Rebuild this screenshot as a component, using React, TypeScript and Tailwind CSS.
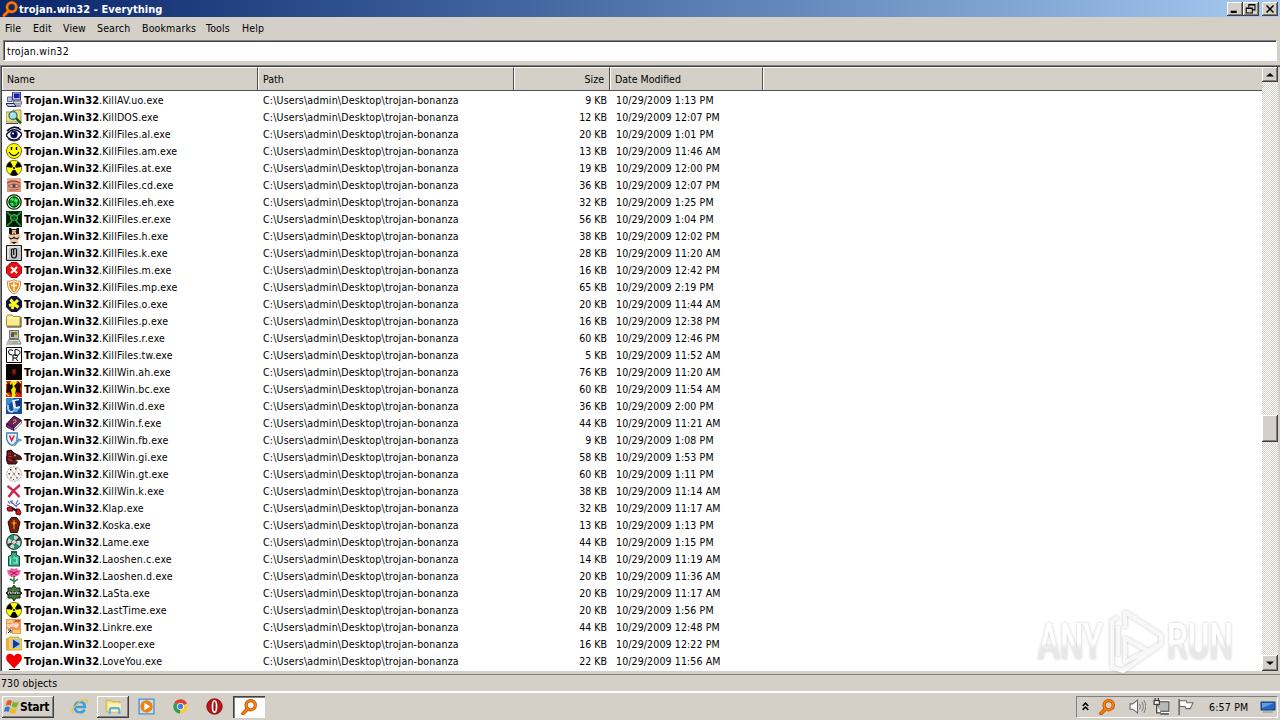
import type { ReactNode } from 'react';

const raised = "bg-[#d4d0c8] shadow-[inset_-1px_-1px_#404040,inset_1px_1px_#fff,inset_-2px_-2px_#808080]";

function Svg({ children, size = 16, className = "" }: { children: ReactNode; size?: number; className?: string }) {
    return (
        <svg width={size} height={size} viewBox="0 0 16 16" className={`shrink-0 ${className}`}>
            {children}
        </svg>
    );
}

function Magnifier({ size = 16 }: { size?: number }) {
    return (
        <Svg size={size}>
            <path d="M6.5 10 2 14.5" stroke="#b34700" strokeWidth="3.6" strokeLinecap="round" />
            <circle cx="9.7" cy="6.2" r="4.6" fill="none" stroke="#b34700" strokeWidth="3.2" />
            <path d="M6.5 10 2 14.5" stroke="#ff8000" strokeWidth="2" strokeLinecap="round" />
            <circle cx="9.7" cy="6.2" r="4.6" fill="none" stroke="#ff8000" strokeWidth="2" />
        </Svg>
    );
}

function Radiation() {
    return (
        <Svg>
            <circle cx="8" cy="8" r="7.7" fill="#ff0" stroke="#222200" strokeWidth=".6" />
            <path d="M8 8 .4 7A7.7 7.7 0 0 1 4.2 1.4ZM8 8l3.8-6.6A7.7 7.7 0 0 1 15.6 7ZM8 8l4 6.6a7.7 7.7 0 0 1-8 0Z" />
            <circle cx="8" cy="8" r="1.9" fill="#ff0" />
            <circle cx="8" cy="8" r="1.1" />
        </Svg>
    );
}

const icons: Record<string, ReactNode> = {
    network: (
        <Svg>
            <path d="M6.500 0h8v8h-8z" fill="#c0c0c8" stroke="#333366" />
            <path d="M8 1.5h5.500V6H8z" fill="#1020d0" />
            <path d="M7 9h8l1 3H8z" fill="#d8d8d8" stroke="#444466" strokeWidth=".8" />
            <path d="M1.500 5h4.500v4.500H1.500z" fill="#c0c0e8" stroke="#6060a0" />
            <path d="M0 11.5h8l2 3H2z" fill="#c8c8e0" stroke="#222266" />
            <path d="M9 14h6" stroke="#222266" />
        </Svg>
    ),
    searchFolder: (
        <Svg>
            <path d="M0 3h6l1-2h8v12H0z" fill="#f3e27a" stroke="#8a7a30" strokeWidth=".8" />
            <circle cx="7" cy="6.5" r="4" fill="#9fe4e8" stroke="#407880" strokeWidth="1.4" />
            <path d="m5 6 2-2" stroke="#fff" />
            <path d="m10 9 5 5.5" stroke="#146018" strokeWidth="2.6" />
            <path d="M0 14.5h12" stroke="#444" />
        </Svg>
    ),
    eye: (
        <Svg>
            <path d="M0 9q8-10 16-1-3 6-8 6T0 9Z" fill="#fff" stroke="#080828" strokeWidth="1.4" />
            <circle cx="8" cy="8.5" r="3.7" fill="#101070" />
            <circle cx="8" cy="8.5" r="2" fill="#000020" />
            <path d="M6 7.5h2" stroke="#fff" strokeWidth="1.4" />
            <path d="M1 5q7-7 14-1M4 2.5Q8 0 13 2" fill="none" stroke="#080828" strokeWidth="1.4" />
            <path d="M2 13q6 4 12 0" fill="none" stroke="#202050" />
        </Svg>
    ),
    smiley: (
        <Svg>
            <circle cx="8" cy="8" r="7.5" fill="#ffff00" stroke="#806800" />
            <path d="M5.5 4v3M10.5 4v3" stroke="#000" strokeWidth="1.5" />
            <path d="M3 9q5 7.5 10 0" fill="none" stroke="#000" strokeWidth="1.1" />
        </Svg>
    ),
    radiation: <Radiation />,
    eyePhoto: (
        <Svg>
            <path d="M1 1h14v14H1z" fill="#e0947c" />
            <path d="M1 1h14v4Q8 2 1 5z" fill="#f0b098" />
            <path d="M1 6q6-4 13 0" fill="none" stroke="#9a5040" strokeWidth="1.3" />
            <path d="M2 9q6-4 12 0-6 3.500-12 0Z" fill="#d8c8c0" stroke="#9c5a48" />
            <circle cx="8" cy="8.7" r="1.7" fill="#444858" />
            <path d="M3 13q5 1 10-1" stroke="#b46450" fill="none" />
        </Svg>
    ),
    greenBall: (
        <Svg>
            <circle cx="8" cy="8" r="7.2" fill="#e8ffe8" stroke="#002800" strokeWidth="1.3" />
            <circle cx="8" cy="8" r="5.2" fill="#0a7a20" stroke="#002800" />
            <path d="M4 6q1-3 4-2l-1 3ZM9 4l3 2-1 3-3-2ZM4 9l3 0 1 3-2 0ZM9 10l2-1 0 2Z" fill="#30f058" />
        </Svg>
    ),
    biohazard: (
        <Svg>
            <path d="M0 0h16v16H0z" fill="#041c06" />
            <path d="m1 1 5 5M15 1l-5 5M1 15l5-5M15 15l-5-5" stroke="#249838" strokeWidth="1.7" />
            <circle cx="8" cy="7" r="3.5" fill="#1a7028" stroke="#40c850" />
            <path d="M6 6.5h1.4M9 6.5h1.4M7 10v3M9 10v3" stroke="#021002" strokeWidth="1.4" />
            <path d="M.5.5h15v15H.5z" fill="none" stroke="#0a3810" />
        </Svg>
    ),
    woman: (
        <Svg>
            <path d="M3 0h2l1 1h4l1-1h2v6l-2 1H5L3 6z" fill="#201410" />
            <path d="M6 2h4v4H6zM2 7l12-1 1 4-3 1 .5 5h-9l.5-5-2-1z" fill="#ecc8a8" />
            <path d="M3 8.500q2.500 3.500 5 0 2.500 3.500 5 0l-1 3-4-1-4 1z" fill="#181010" />
            <path d="M6.300 3.500h1M8.700 3.500h1M7 5.300h2" stroke="#503020" strokeWidth=".8" />
            <path d="M5 14h6l-3 2z" fill="#181010" />
        </Svg>
    ),
    clip: (
        <Svg>
            <path d="M.5.5h15v15H.5z" fill="#c4c4c4" stroke="#181818" />
            <path d="M2 13.500V2h12" fill="none" stroke="#fff" />
            <path d="M5.500 4v6q0 3 2.500 3t2.500-3V4.500q0-1-1.300-1-1.500 0-1.500 1.200V10M5.500 4h2" fill="none" stroke="#101010" strokeWidth="1.200" />
        </Svg>
    ),
    error: (
        <Svg>
            <path d="M5 .5h6L15.500 5v6L11 15.500H5L.5 11V5z" fill="#e81018" stroke="#a00008" />
            <path d="m5 5 6 6m0-6-6 6" stroke="#fff" strokeWidth="2" />
        </Svg>
    ),
    shield: (
        <Svg>
            <path d="M8 .7q3.500 2 6.500 1.500 1 9-6.500 13Q.5 11.200 1.500 2.200 4.500 2.700 8 .7Z" fill="#fff4dc" stroke="#b89060" />
            <path d="M8 2.500q2.500 1.500 5 1.300.3 6.500-5 9.700Q2.700 10.300 3 3.800q2.500.2 5-1.300Z" fill="#f09020" />
            <path d="M8 3.500V12M5 6.500h6" stroke="#fff8e8" strokeWidth="1.500" />
        </Svg>
    ),
    propeller: (
        <Svg>
            <path d="M5 .5h6L15.500 5v6L11 15.500H5L.5 11V5z" fill="#101048" stroke="#080820" />
            <path d="M8 8 4.500 3.500M8 8l4-4M8 8l-5 1.500M8 8l4.500 3.500M8 8l-2 5" stroke="#f8f820" strokeWidth="3" />
        </Svg>
    ),
    folder: (
        <Svg>
            <path d="M.5 3.500 2 2h4l1.500 1.500H14V13H.5z" fill="#ffec8c" stroke="#a09028" />
            <path d="M1 5h12.500" stroke="#fffbe0" />
            <path d="M15 4v10H1" fill="none" stroke="#383010" />
        </Svg>
    ),
    computer: (
        <Svg>
            <path d="M3.500.5h9v8h-9z" fill="#c8c8b8" stroke="#70706a" />
            <path d="M5 2h6v5H5z" fill="#301820" />
            <path d="M5 2h3v2.500H5z" fill="#c04020" />
            <path d="M8 2h3v2.500H8z" fill="#30a040" />
            <path d="M5 4.500h3V7H5z" fill="#3050c0" />
            <path d="M8 4.500h3V7H8z" fill="#e0c030" />
            <path d="M3 9.500h10l2 4.500H2z" fill="#d8dcc8" stroke="#777" />
            <path d="M1 11h5l-1 4H0z" fill="#b8bcb0" />
            <path d="M6 12h6" stroke="#608050" />
        </Svg>
    ),
    cdr: (
        <Svg>
            <path d="M.5.5h15v15H.5z" fill="#fff" stroke="#000" />
            <path d="M7 3.500Q2.500 1.500 2.500 5t4 3M9 2.500v6q5 0 5-3t-5-3M7 14V8h2.500q2 0 2 1.500T9.500 11H7m2.500 0 2.500 3" fill="none" stroke="#000" />
        </Svg>
    ),
    dark: (
        <Svg>
            <path d="M0 0h16v16H0z" fill="#0c0202" />
            <path d="M6 5h4v5l-2 2-2-2z" fill="#5c1008" />
            <path d="M7 6h2v3H7z" fill="#902010" />
        </Svg>
    ),
    flames: (
        <Svg>
            <path d="M0 0h16v16H0z" fill="#e02010" />
            <path d="M5 0h6l-1 5 2 3-3 8H6L5 9 3 5z" fill="#f8e800" />
            <path d="m1 1 4 3 1-2 1 4-2 3 1 5-3-3-3 2 1-5zM10 3l3-2 2 3-1 4 1 5-4-2-2 3 1-6-2-3z" fill="#180c04" />
            <path d="M0 12l3 3M13 0l2 2M0 1l1 2" stroke="#f8e800" strokeWidth="1.400" />
        </Svg>
    ),
    blueDoc: (
        <Svg>
            <path d="M0 0h16v16H0z" fill="#184c98" />
            <path d="M0 0h8L5 5 0 8z" fill="#3c8ccc" />
            <path d="m6 2 7-1 1 9-6 3z" fill="#e8f0ff" />
            <path d="m9 3 5-1v6l-4 1z" fill="#103068" />
            <path d="M2 7v4q1 3 4 3l3-2" fill="none" stroke="#c8e4ff" strokeWidth="1.600" />
            <path d="m9 10 4 1-2 3H7z" fill="#58b0e8" />
        </Svg>
    ),
    book: (
        <Svg>
            <path d="M.5 9 8 1l7.500 4.500L8 13z" fill="#642060" stroke="#280828" />
            <path d="M.5 9v3L8 15.500V13z" fill="#8c3080" stroke="#280828" strokeWidth=".8" />
            <path d="m8 13 7.500-7.500V8L8 15.500z" fill="#fff" stroke="#333" strokeWidth=".7" />
            <path d="M7 5.500q2-1.500 3 0T7.500 8v1" fill="none" stroke="#f0b040" />
        </Svg>
    ),
    vShield: (
        <Svg>
            <path d="M.7 1h10.600v6q-1 4.500-5.300 6.500Q1.700 11.500.7 7z" fill="#e8f4ff" stroke="#4080b8" strokeWidth="1.300" />
            <path d="m3.500 3.500 2.200 5 2.500-5" fill="none" stroke="#d02838" strokeWidth="1.600" />
            <path d="m8 13.500 4.500-5M11 5q0 3.500 4.500 3" stroke="#6898c4" strokeWidth="2.200" fill="none" />
        </Svg>
    ),
    dragon: (
        <Svg>
            <path d="M1 2l4-1 3 3 6 3 2 3-6 1-3-1 4 3-1 2H2q-3-5-1-9z" fill="#601418" stroke="#280408" />
            <path d="m2 4 3 1M2 7l4 1M2 10l4 2" stroke="#b83838" strokeWidth="1.200" />
            <path d="M8 6.500h2" stroke="#50d060" strokeWidth="1.400" />
            <path d="M10 10.500h5M7 13h5" stroke="#284828" />
        </Svg>
    ),
    ballDots: (
        <Svg>
            <circle cx="8" cy="8" r="7.300" fill="#f4f4f4" stroke="#a0a0a0" strokeDasharray="2 1" />
            <path d="M4 3h1.500v1.500H4zM9 2h1.500v1.500H9zM2.500 7H4v1.500H2.500zM7 7h2v2H7zM12 7h1.500v1.500H12zM4 11h1.500v1.500H4zM10 11h1.500v1.500H10zM7 13h1v1H7z" fill="#8c2020" />
            <path d="m5 4 3 4 3-4M4 12l4-4 3 4" fill="none" stroke="#c0b8b8" strokeWidth=".7" />
        </Svg>
    ),
    redX: (
        <Svg>
            <path d="M1.500 3q6 4 12 11M14 2Q7 7 2.500 14" fill="none" stroke="#c82850" strokeWidth="2.400" />
            <path d="m2 2 4 3" stroke="#e88098" />
        </Svg>
    ),
    klap: (
        <Svg>
            <path d="m2 1 2 3M6 0v4M12 0l-2 4M1 5l3 1M4 1l7 6M14 3l-4 3" stroke="#6060b8" strokeWidth="1.100" />
            <path d="M1 8q2-2 5-1l1 4-5 0zM10 9l3 0 2 3-1 3-4-1z" fill="#d81820" stroke="#500810" />
            <path d="m6 8 5 3" stroke="#301018" strokeWidth="2.400" />
        </Svg>
    ),
    coffin: (
        <Svg>
            <path d="M5.500.5h5L14 5l-2.500 10.500h-7L2 5z" fill="#70220c" stroke="#280c04" />
            <path d="M8 3v9M5.500 6h5" stroke="#e06818" strokeWidth="1.600" />
            <path d="M7.500 5h1v3h-1z" fill="#ffc830" />
        </Svg>
    ),
    disc: (
        <Svg>
            <circle cx="8" cy="8" r="7.300" fill="#c8d8d0" stroke="#183028" strokeWidth="1.200" />
            <path d="M8 8 2 3.500Q5 .7 8 1ZM8 8l6 4.500q-3 2.800-6 2.500Z" fill="#189868" />
            <path d="m8 8 7-2-2-3ZM8 8l-7 2 2 3Z" fill="#303840" />
            <circle cx="8" cy="8" r="2.300" fill="#fff" stroke="#555" />
            <path d="M8 7.500v1" stroke="#555" />
        </Svg>
    ),
    jar: (
        <Svg>
            <path d="M5.500.5h5V4l3 1.500v9.500h-11V5.500l3-1.500z" fill="#30b088" stroke="#105040" />
            <path d="M5 0h6v2H5z" fill="#285848" />
            <path d="M4.500 6.500v7M7 7h4v5H7" fill="none" stroke="#a8f0d8" strokeWidth="1.200" />
        </Svg>
    ),
    rose: (
        <Svg>
            <path d="M1 2l3 0 1-2 3 1 3-1 1 2 3 0-2 5-4 2-4 0-3-3z" fill="#f060a0" />
            <path d="m4 3 4 2 4-2M5 7l3-2 3 2" fill="none" stroke="#b01858" />
            <path d="M8 8v8M8 13l-4-2M8 14l4-3" stroke="#287838" strokeWidth="1.400" fill="none" />
        </Svg>
    ),
    badge: (
        <Svg>
            <path d="m8 0 2 3h4v3l2 2-2 2v3h-4l-2 3-2-3H2v-3L0 8l2-2V3h4z" fill="#407838" stroke="#102810" />
            <path d="M1 6h14v4H1z" fill="#282c28" />
            <path d="M2.500 9V7h2v2m1.500 0V7h2v2m1.500 0V7h2v2m1.500 0V7" fill="none" stroke="#b8c0b8" />
        </Svg>
    ),
    tiles: (
        <Svg>
            <path d="M0 0h15v15H0z" fill="#f09858" />
            <path d="M1 1h6v3H1z" fill="#f8c888" />
            <path d="M2 5v3h2V5m4 3V5H6v3M9 5h3v1.500H9V8h3" fill="none" stroke="#fff" />
            <path d="M1 10h5v5H1z" fill="#fff" />
            <path d="m2 14 3-3m0 3v-3H2" fill="none" stroke="#222" />
            <path d="M7 11h7v3H7z" fill="#f8d060" />
            <path d="M9 1h5v2H9z" fill="#e05838" />
        </Svg>
    ),
    player: (
        <Svg>
            <path d="M0 3 4 1h9v2h3v11H0z" fill="#f8d040" stroke="#c89820" strokeWidth=".8" />
            <path d="M0 3h3v11H0z" fill="#f0a848" />
            <path d="M5 3h9v9H5z" fill="#a8c8f0" />
            <path d="m7 3.500 7 4.500-7 4.500z" fill="#183890" />
        </Svg>
    ),
    heart: (
        <Svg>
            <path d="M8 15.500 1 8Q-1 4 1.500 1.500 5-.8 8 3q3-3.800 6.500-1.500Q17 4 15 8z" fill="#f00000" />
        </Svg>
    ),
};

const files: [string, string, string, string][] = [
    ["network", "KillAV.uo", "9", "1:13 PM"],
    ["searchFolder", "KillDOS", "12", "12:07 PM"],
    ["eye", "KillFiles.al", "20", "1:01 PM"],
    ["smiley", "KillFiles.am", "13", "11:46 AM"],
    ["radiation", "KillFiles.at", "19", "12:00 PM"],
    ["eyePhoto", "KillFiles.cd", "36", "12:07 PM"],
    ["greenBall", "KillFiles.eh", "32", "1:25 PM"],
    ["biohazard", "KillFiles.er", "56", "1:04 PM"],
    ["woman", "KillFiles.h", "38", "12:02 PM"],
    ["clip", "KillFiles.k", "28", "11:20 AM"],
    ["error", "KillFiles.m", "16", "12:42 PM"],
    ["shield", "KillFiles.mp", "65", "2:19 PM"],
    ["propeller", "KillFiles.o", "20", "11:44 AM"],
    ["folder", "KillFiles.p", "16", "12:38 PM"],
    ["computer", "KillFiles.r", "60", "12:46 PM"],
    ["cdr", "KillFiles.tw", "5", "11:52 AM"],
    ["dark", "KillWin.ah", "76", "11:20 AM"],
    ["flames", "KillWin.bc", "60", "11:54 AM"],
    ["blueDoc", "KillWin.d", "36", "2:00 PM"],
    ["book", "KillWin.f", "44", "11:21 AM"],
    ["vShield", "KillWin.fb", "9", "1:08 PM"],
    ["dragon", "KillWin.gi", "58", "1:53 PM"],
    ["ballDots", "KillWin.gt", "60", "1:11 PM"],
    ["redX", "KillWin.k", "38", "11:14 AM"],
    ["klap", "Klap", "32", "11:17 AM"],
    ["coffin", "Koska", "13", "1:13 PM"],
    ["disc", "Lame", "44", "1:15 PM"],
    ["jar", "Laoshen.c", "14", "11:19 AM"],
    ["rose", "Laoshen.d", "20", "11:36 AM"],
    ["badge", "LaSta", "20", "11:17 AM"],
    ["radiation", "LastTime", "20", "1:56 PM"],
    ["tiles", "Linkre", "44", "12:48 PM"],
    ["player", "Looper", "16", "12:22 PM"],
    ["heart", "LoveYou", "22", "11:56 AM"],
];

function TitleBar() {
    return (
        <div className="flex h-[17px] items-center bg-linear-to-r from-[#0a246a] to-[#a6caf0] px-[2px]">
            <Magnifier />
            <span className="ml-[1px] grow pt-[2px] text-[11px] font-bold tracking-[0.05px] text-white">trojan.win32 - Everything</span>
            <div className="flex h-[14px]">
                <div className={`flex w-4 justify-center ${raised}`}>
                    <Svg size={14}><path d="M3 10h7v2.500H3z" /></Svg>
                </div>
                <div className={`flex w-4 justify-center ${raised}`}>
                    <Svg size={14}>
                        <path d="M5.500 6V3h7v6h-3M5 3.500h8M2.500 7v5.500h7V7zM2 7.500h8" fill="none" stroke="#000" strokeWidth="1.200" />
                    </Svg>
                </div>
                <div className={`ml-[3px] flex w-4 justify-center ${raised}`}>
                    <Svg size={14}><path d="m4 4 8 8m0-8-8 8" stroke="#000" strokeWidth="1.800" /></Svg>
                </div>
            </div>
        </div>
    );
}

function MenuBar() {
    return (
        <div className="flex h-[23px] items-center pb-px tracking-[0.15px]">
            <span className="ml-[5px] w-[28px]">File</span>
            <span className="w-[30px]">Edit</span>
            <span className="w-[34px]">View</span>
            <span className="w-[45px]">Search</span>
            <span className="w-[64px]">Bookmarks</span>
            <span className="w-[36px]">Tools</span>
            <span>Help</span>
        </div>
    );
}

function Header() {
    const cell = "flex h-full items-center border-l border-t border-white border-r border-r-[#505050] pb-px";
    return (
        <div className="flex h-[24px] shrink-0 border-b border-[#505050] bg-[#d4d0c8]">
            <div className={`w-[256px] pl-[4px] ${cell}`}>Name</div>
            <div className={`w-[256px] pl-[4px] ${cell}`}>Path</div>
            <div className={`w-[96px] justify-end pr-[5px] ${cell}`}>Size</div>
            <div className={`w-[153px] pl-[4px] ${cell}`}>Date Modified</div>
            <div className="grow border-l border-t border-white" />
        </div>
    );
}

function FileList() {
    return (
        <div className="mt-[4px] flex h-[606px] border-l border-t border-[#808080] bg-white">
            <div className="flex grow border-l border-t border-[#404040]">
                <div className="flex grow flex-col overflow-hidden">
                    <Header />
                    {files.map(([icon, name, size, time], i) => (
                        <div key={i} className="flex h-[17px] shrink-0 items-center whitespace-nowrap">
                            <div className="flex w-[255px] items-center pl-[4px]">
                                {icons[icon]}
                                <div className="ml-[2px] flex items-baseline pt-[2px]">
                                    <span className="w-[75px] text-[11px] font-bold tracking-[0.18px]">Trojan.Win32</span>
                                    <span className="tracking-[0.17px]">.{name}.exe</span>
                                </div>
                            </div>
                            <span className="w-[256px] pl-[6px] tracking-[0.19px]">C:\Users\admin\Desktop\trojan-bonanza</span>
                            <span className="w-[94px] text-right">{size} KB</span>
                            <span className="pl-[9px] tracking-[0.12px]">10/29/2009 {time}</span>
                        </div>
                    ))}
                    <div className="ml-[7px] h-[2px] w-[11px] shrink-0 border-t border-black" />
                </div>
                <div className="flex w-4 flex-col bg-[repeating-conic-gradient(#fff_0_25%,#d4d0c8_0_50%)] bg-[length:2px_2px]">
                    <div className={`flex h-[15px] items-center justify-center ${raised}`}>
                        <Svg size={8}><path d="M0 11 8 4l8 7z" /></Svg>
                    </div>
                    <div className={`mt-[333px] h-[27px] ${raised}`} />
                    <div className={`mt-auto flex h-4 items-center justify-center ${raised}`}>
                        <Svg size={8}><path d="m0 5 8 7 8-7z" /></Svg>
                    </div>
                </div>
                <div className="w-[2px] bg-[#d4d0c8]" />
            </div>
        </div>
    );
}

function Watermark() {
    return (
        <svg width="230" height="90" className="absolute left-[1034px] top-[604px] overflow-visible">
            <defs>
                <linearGradient id="fade" x1="0" y1="0" x2="0" y2="1">
                    <stop offset=".5" stopColor="#fff" />
                    <stop offset=".62" stopColor="#e8e8e8" />
                </linearGradient>
                <filter id="glow">
                    <feDropShadow dx="0" dy="0" stdDeviation="1.6" floodColor="#888" floodOpacity=".5" />
                </filter>
            </defs>
            <g filter="url(#glow)" fill="url(#fade)" fontFamily="Roboto, sans-serif" fontSize="50" fontWeight="500">
                <text x="4" y="55" textLength="65" lengthAdjust="spacingAndGlyphs">ANY</text>
                <text x="133" y="55" textLength="66" lengthAdjust="spacingAndGlyphs">RUN</text>
                <path d="M84 13 78 17v46l11 4 38-27M84 52V22M91 24V8l36 23v9L91 58V34l23 13" fill="none" stroke="#f8f8f8" strokeWidth="4" strokeLinejoin="round" />
            </g>
        </svg>
    );
}

function Taskbar() {
    return (
        <div className="flex h-[28px] items-center border-t border-white bg-[#d4d0c8] px-[2px]">
            <div className={`flex h-[22px] w-[52px] items-center pl-[2px] ${raised}`}>
                <Svg>
                    <path d="M3 2q3-2 5 0L6.500 7q-2-2-5 0z" fill="#e85820" />
                    <path d="M9 2.500q3 2 6 0L13 8q-3 1.500-5.500-.5z" fill="#78b828" />
                    <path d="M1 8.500q3-2 5 0L4.500 13q-2-1.500-4.500 0z" fill="#2878d0" />
                    <path d="M7 9q3 2 6 0l-1.500 5q-3 1.500-6-.5z" fill="#f8b818" />
                </Svg>
                <span className="text-[12px] font-bold tracking-[-0.3px]">Start</span>
            </div>
            <Svg size={17} className="ml-[17px]">
                <path d="M3.500 8.500h9.500Q13 3.700 8.500 3.700T3.500 9q.5 4.500 5 4.500 3 0 4.300-2.500" fill="none" stroke="#38a0e0" strokeWidth="2.400" />
                <path d="M2 14.500Q-1 13 5 6.500T15 2q1 1-1 4" fill="none" stroke="#e8c040" strokeWidth="1.200" />
            </Svg>
            <div className={`ml-[9px] flex h-[22px] w-[32px] items-center justify-center ${raised}`}>
                <Svg size={17}>
                    <path d="M1 2h5l1 1.500h7V13H1z" fill="#f6dc80" stroke="#c8a848" strokeWidth=".8" />
                    <path d="M3 5h12v8H3z" fill="#fff2b0" />
                    <path d="M4.500 15v-3.500q0-2 2-2h5q2 0 2 2V15" fill="none" stroke="#58b0e0" strokeWidth="2" />
                </Svg>
            </div>
            <Svg size={17} className="ml-[9px]">
                <path d="M1 1h14v14H1z" fill="#c8e0f4" stroke="#4890c8" strokeWidth="1.200" />
                <circle cx="8" cy="8" r="5.800" fill="#f08010" />
                <path d="m6 4.500 5.500 3.500L6 11.500z" fill="#fff" />
            </Svg>
            <Svg size={15} className="ml-[18px]">
                <path d="M8 8 1.500 4A7.500 7.500 0 0 1 15 5z" fill="#e04030" />
                <path d="M8 8 1.500 4A7.500 7.500 0 0 0 7.500 15.500z" fill="#30a050" />
                <path d="m8 8 7-3A7.500 7.500 0 0 1 7.500 15.500z" fill="#f8cc30" />
                <circle cx="8" cy="8" r="3.700" fill="#fff" />
                <circle cx="8" cy="8" r="2.900" fill="#4080e0" />
            </Svg>
            <Svg size={17} className="ml-[18px]">
                <circle cx="8" cy="8" r="7.300" fill="#b81418" stroke="#780808" strokeWidth=".7" />
                <ellipse cx="8" cy="8" rx="1.900" ry="5.400" fill="#901010" stroke="#fff" strokeWidth="1.600" />
            </Svg>
            <div className="ml-[10px] flex h-[22px] w-[32px] items-center justify-center bg-white shadow-[inset_1px_1px_#404040,inset_2px_2px_#808080]">
                <Magnifier />
            </div>
            <div className="ml-auto flex h-[22px] w-[202px] items-center border border-white border-l-[#808080] border-t-[#808080] pl-[4px]">
                <Svg size={9}><path d="m3 7 5-5 5 5M3 14l5-5 5 5" fill="none" stroke="#000" strokeWidth="2.600" /></Svg>
                <span className="ml-[9px]"><Magnifier size={16} /></span>
                <Svg size={17} className="ml-[14px]">
                    <path d="M1 5.500h2.500L8 2v12L3.500 10.500H1z" fill="#fff" stroke="#666" />
                    <path d="M10 5.500q1.500 2.500 0 5M12 3.500q3 4.500 0 9M14 2q3.500 6 0 12" fill="none" stroke="#777" strokeWidth=".9" />
                </Svg>
                <Svg size={17} className="ml-[7px]">
                    <path d="M4.500 3.500h10.500v9H4.500z" fill="#b8b8b8" stroke="#fff" strokeWidth="3" />
                    <path d="M4.500 3.500h10.500v9H4.500z" fill="#b8b8b8" stroke="#444" />
                    <path d="M7 15h8" stroke="#444" strokeWidth="1.300" />
                    <path d="M1 2.500h5V6H1zM2 0v2M5 0v2M3.500 6v8h4" fill="#fff" stroke="#444" strokeWidth="1.200" />
                </Svg>
                <Svg size={17} className="ml-[7px]">
                    <path d="M2 1v15" stroke="#666" strokeWidth="1.400" />
                    <path d="M2.500 2.500h6l1 2h5.500l-2.500 5.500H8.500l-1-2h-5z" fill="#fff" stroke="#666" />
                </Svg>
                <span className="ml-[15px] whitespace-nowrap tracking-[0.2px]">6:57 PM</span>
                <svg width="16" height="14" className="ml-auto mr-[1px]">
                    <path d="M1 2h14v8H1z" fill="#2468c0" stroke="#103878" />
                    <path d="M2 3h12L2 8z" fill="#60a0e0" />
                    <path d="M3 12h10" stroke="#8090a0" />
                </svg>
            </div>
        </div>
    );
}

export default function App() {
    return (
        <div className="relative flex h-[720px] w-[1280px] flex-col overflow-hidden bg-[#d4d0c8] font-['DejaVu_Sans_Condensed','DejaVu_Sans',sans-serif] text-[10.5px] leading-[14px] text-black">
            <TitleBar />
            <MenuBar />
            <div className="mx-[3px] flex h-[21px] items-center border border-white border-l-[#808080] border-t-[#808080] bg-white pl-[3px] tracking-[0.25px] shadow-[inset_1px_1px_#404040]">
                trojan.win32
            </div>
            <FileList />
            <div className="mt-[3px] flex h-[18px] items-center border-b border-t border-b-white border-t-[#808080] pl-[1px] tracking-[0.1px]">
                730 objects
            </div>
            <div className="mt-auto">
                <Taskbar />
            </div>
            <Watermark />
        </div>
    );
}
